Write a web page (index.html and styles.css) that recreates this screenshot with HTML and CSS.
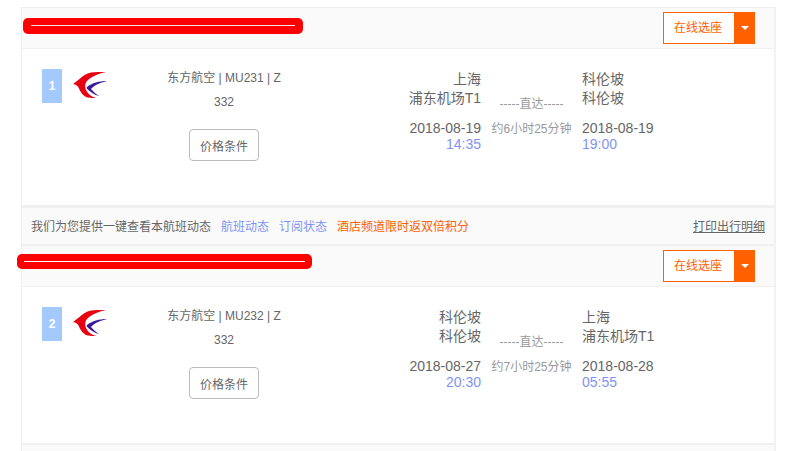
FILE: index.html
```html
<!DOCTYPE html>
<html lang="zh-CN">
<head>
<meta charset="utf-8">
<title>航班行程</title>
<link rel="stylesheet" href="styles.css">
</head>
<body>
<div class="panel">
  <section class="leg">
    <header class="leg-head">
      <span class="redact redact-a"></span>
      <div class="seat"><span class="seat-label">在线选座</span><span class="seat-arrow"></span></div>
    </header>
    <div class="leg-body">
      <div class="num">1</div>
      <svg class="logo" viewBox="0 0 34 26" aria-hidden="true">
        <path fill="#e60012" d="M33 0 C27 0 22 0 18 0.5 C13 1.5 10 4 6.5 7 L0 12 C3 12.5 5 14 6 16.5 C8 21 11 25 15 25.5 C18 26 20 26 23 26 C18 24.5 15 22 13 18 C11.5 14 12 10.5 15.5 7.5 C20 4 26 1.5 33 0 Z"/>
        <path fill="#3a1a9c" d="M34 9 C26 9 19 11 14 15 L13.5 16 C16 19 21 23 26 24 C23 22 20 19.5 18 17 C21 13.5 27 10.5 34 9 Z"/>
      </svg>
      <div class="carrier">
        <p class="carrier-line">东方航空 | MU231 | Z</p>
        <p class="carrier-line">332</p>
        <button class="terms" type="button">价格条件</button>
      </div>
      <div class="stop stop-from">
        <p>上海</p><p>浦东机场T1</p>
        <p class="date">2018-08-19</p><p class="time">14:35</p>
      </div>
      <div class="mid">
        <p class="direct">-----直达-----</p>
        <p class="dur">约6小时25分钟</p>
      </div>
      <div class="stop">
        <p>科伦坡</p><p>科伦坡</p>
        <p class="date">2018-08-19</p><p class="time">19:00</p>
      </div>
    </div>
  </section>
  <div class="actions">
    <span class="act-text">我们为您提供一键查看本航班动态</span>
    <a class="act-link">航班动态</a>
    <a class="act-link">订阅状态</a>
    <a class="act-promo">酒店频道限时返双倍积分</a>
    <a class="act-print">打印出行明细</a>
  </div>
  <section class="leg">
    <header class="leg-head">
      <span class="redact redact-b"></span>
      <div class="seat"><span class="seat-label">在线选座</span><span class="seat-arrow"></span></div>
    </header>
    <div class="leg-body">
      <div class="num">2</div>
      <svg class="logo" viewBox="0 0 34 26" aria-hidden="true">
        <path fill="#e60012" d="M33 0 C27 0 22 0 18 0.5 C13 1.5 10 4 6.5 7 L0 12 C3 12.5 5 14 6 16.5 C8 21 11 25 15 25.5 C18 26 20 26 23 26 C18 24.5 15 22 13 18 C11.5 14 12 10.5 15.5 7.5 C20 4 26 1.5 33 0 Z"/>
        <path fill="#3a1a9c" d="M34 9 C26 9 19 11 14 15 L13.5 16 C16 19 21 23 26 24 C23 22 20 19.5 18 17 C21 13.5 27 10.5 34 9 Z"/>
      </svg>
      <div class="carrier">
        <p class="carrier-line">东方航空 | MU232 | Z</p>
        <p class="carrier-line">332</p>
        <button class="terms" type="button">价格条件</button>
      </div>
      <div class="stop stop-from">
        <p>科伦坡</p><p>科伦坡</p>
        <p class="date">2018-08-27</p><p class="time">20:30</p>
      </div>
      <div class="mid">
        <p class="direct">-----直达-----</p>
        <p class="dur">约7小时25分钟</p>
      </div>
      <div class="stop">
        <p>上海</p><p>浦东机场T1</p>
        <p class="date">2018-08-28</p><p class="time">05:55</p>
      </div>
    </div>
  </section>
  <div class="tail"></div>
</div>
</body>
</html>
```
FILE: styles.css
```css
* { box-sizing: border-box; }
html, body { height: 451px; overflow: hidden; }
body {
  margin: 0;
  background: #fff;
  font-family: "Liberation Sans", "Noto Sans CJK SC", sans-serif;
  color: #666;
  font-size: 12px;
}
p { margin: 0; }
.panel {
  width: 755px;
  margin: 7px 0 0 21px;
  border-left: 1px solid #eee;
  border-right: 2px solid #f2f2f2;
  border-top: 1px solid #eee;
}
.leg-head {
  position: relative;
  height: 41px;
  background: #fafafa;
  border-bottom: 1px solid #f0f0f0;
  display: flex;
  justify-content: flex-end;
  align-items: flex-start;
  padding: 4px 19px 0 0;
}
.redact {
  position: absolute;
  background: #f00;
  border-radius: 5px;
}
.redact::after {
  content: "";
  position: absolute;
}
.redact-a { left: 1px; top: 10px; width: 280px; height: 16px; }
.redact-a::after {
  left: 8px;
  right: 8px;
  top: 7px;
  height: 1px;
  background: #f4e4ea;
}
.redact-b { left: -5px; top: 8px; width: 295px; height: 15px; }
.redact-b::after {
  left: 7px;
  right: 7px;
  top: 7px;
  height: 1px;
  background: #fff;
}
.seat { display: flex; width: 92px; height: 32px; }
.seat-label {
  width: 71px;
  border: 1px solid #ff6000;
  border-right: 0;
  padding-right: 2px;
  background: #fff;
  color: #ff6000;
  font-size: 12px;
  line-height: 30px;
  text-align: center;
}
.seat-arrow {
  width: 21px;
  background: #ff6000;
  position: relative;
}
.seat-arrow::after {
  content: "";
  position: absolute;
  left: 7px;
  top: 14px;
  border: 4px solid transparent;
  border-top: 4px solid #fff;
  border-bottom: 0;
}
.leg-body {
  height: 156px;
  background: #fff;
  display: flex;
  align-items: flex-start;
  padding-top: 17px;
}
.num {
  width: 20px;
  height: 34px;
  margin: 3px 0 0 20px;
  background: #a3c9ff;
  color: #fff;
  font-weight: 700;
  font-size: 12px;
  line-height: 34px;
  text-align: center;
}
.logo { width: 34px; height: 26px; margin: 6px 0 0 11px; flex: none; }
.carrier {
  width: 180px;
  margin-left: 27px;
  text-align: center;
}
.carrier-line { line-height: 24px; }
.terms {
  display: block;
  width: 70px;
  height: 32px;
  margin: 15px auto 0;
  padding: 0;
  background: #fff;
  border: 1px solid #bbb;
  border-radius: 4px;
  color: #666;
  font: inherit;
}
.stop {
  width: 110px;
  padding-top: 4px;
  font-size: 14px;
  line-height: 19px;
}
.stop-from { text-align: right; width: 125px; margin-left: 42px; }
.date { margin-top: 12px; line-height: 17px; }
.time { color: #7f93f5; line-height: 15px; }
.mid { width: 81px; margin: 0 10px; text-align: center; color: #999; padding-top: 28px; }
.direct { font-size: 12px; line-height: 20px; }
.dur { margin-top: 5px; font-size: 12px; line-height: 20px; white-space: nowrap; }
.actions {
  height: 41px;
  background: #fafafa;
  border-top: 3px solid #f0f0f0;
  border-bottom: 2px solid #f0f0f0;
  display: flex;
  align-items: center;
  padding: 2px 9px 0 9px;
  gap: 10px;
  line-height: 34px;
}
.act-text { color: #666; }
.act-link { color: #7f93f5; }
.act-promo { color: #ff6000; }
.act-print { margin-left: auto; text-decoration: underline; color: #666; }
.tail { height: 10px; background: #fafafa; border-top: 2px solid #f0f0f0; }
```
